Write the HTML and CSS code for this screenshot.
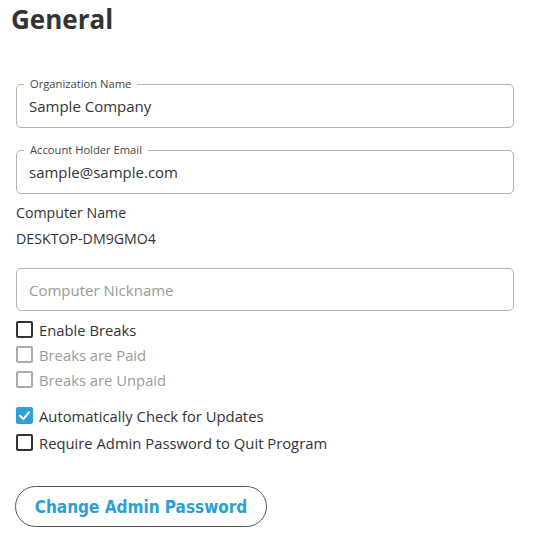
FILE: index.html
```html
<!DOCTYPE html>
<html lang="en">
<head>
<meta charset="utf-8">
<title>General</title>
<link rel="stylesheet" href="styles.css">
</head>
<body>
<main class="page">
  <h1 class="title">General</h1>

  <fieldset class="field field-first">
    <legend class="field-legend">Organization Name</legend>
    <input class="field-input" type="text" value="Sample Company">
  </fieldset>

  <fieldset class="field">
    <legend class="field-legend">Account Holder Email</legend>
    <input class="field-input" type="text" value="sample@sample.com">
  </fieldset>

  <div class="info">
    <div class="info-line">Computer Name</div>
    <div class="info-line">DESKTOP-DM9GMO4</div>
  </div>

  <input class="plain-input" type="text" placeholder="Computer Nickname">

  <div class="checks checks-breaks">
    <label class="check">
      <span class="box"></span>
      <span class="check-label">Enable Breaks</span>
    </label>
    <label class="check check-disabled">
      <span class="box"></span>
      <span class="check-label">Breaks are Paid</span>
    </label>
    <label class="check check-disabled">
      <span class="box"></span>
      <span class="check-label">Breaks are Unpaid</span>
    </label>
  </div>

  <div class="checks checks-program">
    <label class="check check-tall">
      <span class="box box-checked">
        <svg class="tick" viewBox="0 0 17 17" width="17" height="17"><polyline points="4,8.8 7.3,12 13.2,5.2" fill="none" stroke="#fff" stroke-width="2" stroke-linecap="round" stroke-linejoin="round"/></svg>
      </span>
      <span class="check-label">Automatically Check for Updates</span>
    </label>
    <label class="check check-tall">
      <span class="box"></span>
      <span class="check-label">Require Admin Password to Quit Program</span>
    </label>
  </div>

  <button class="pill-button" type="button">Change Admin Password</button>
</main>
</body>
</html>
```

FILE: styles.css
```css
* {
  box-sizing: border-box;
}

html, body {
  margin: 0;
  padding: 0;
  background: #ffffff;
}

body {
  font-family: "Open Sans", "Noto Sans", "DejaVu Sans", sans-serif;
  color: #333333;
}

.page {
  width: 547px;
  padding: 0 33px 0 16px;
  display: flex;
  flex-direction: column;
  align-items: flex-start;
}

.title {
  margin: 2px 0 0 -5px;
  font-size: 26px;
  line-height: 34px;
  font-weight: 700;
  color: #333333;
}

.field {
  width: 498px;
  margin: 15px 0 0 0;
  padding: 0 7px 7px 7px;
  border: 1px solid #b3b3b3;
  border-radius: 5px;
  min-width: 0;
}

.field-first {
  margin-top: 41px;
}

.field-legend {
  padding: 0 6px;
  font-size: 11.2px;
  line-height: 14px;
  color: #444444;
}

.field-input {
  display: block;
  width: 100%;
  height: 29px;
  margin: 0;
  padding: 0 5px;
  border: none;
  outline: none;
  background: transparent;
  font-family: inherit;
  font-size: 15px;
  color: #333333;
}

.info {
  margin-top: 6px;
  font-size: 14.2px;
  line-height: 26px;
  color: #333333;
}

.plain-input {
  display: block;
  width: 498px;
  height: 43px;
  margin: 16px 0 0 0;
  padding: 0 12px;
  border: 1px solid #b3b3b3;
  border-radius: 5px;
  outline: none;
  background: #ffffff;
  font-family: inherit;
  font-size: 15px;
  color: #333333;
}

.plain-input::placeholder {
  color: #9a9a9a;
}

.checks {
  display: flex;
  flex-direction: column;
}

.checks-breaks {
  margin-top: 6px;
}

.checks-program {
  margin-top: 10px;
}

.check {
  display: flex;
  align-items: center;
  height: 25px;
  gap: 6px;
  font-size: 14.8px;
  color: #333333;
}

.check-tall {
  height: 27px;
}

.box {
  display: block;
  width: 17px;
  height: 17px;
  border: 2px solid #333333;
  border-radius: 2px;
  background: #ffffff;
  flex: none;
}

.check-disabled {
  color: #9a9a9a;
}

.check-disabled .box {
  border-color: #ababab;
}

.box-checked {
  border: none;
  background: #2d9fd9;
}

.tick {
  display: block;
}

.pill-button {
  margin: 30px 0 0 -1px;
  width: 252px;
  height: 41px;
  padding: 0;
  border: 1px solid #555555;
  border-radius: 21px;
  background: #ffffff;
  font-family: "DejaVu Sans Condensed", "DejaVu Sans", sans-serif;
  font-stretch: condensed;
  font-weight: 700;
  font-size: 17px;
  color: #2b9fd6;
  cursor: pointer;
}
```
